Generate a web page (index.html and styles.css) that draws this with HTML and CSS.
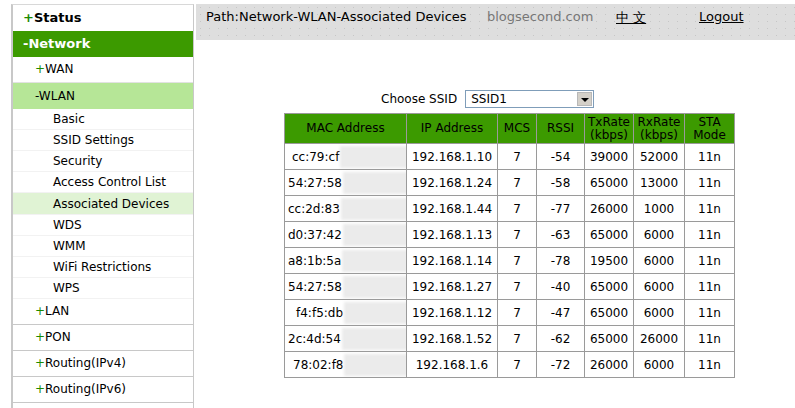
FILE: index.html
```html
<!DOCTYPE html>
<html lang="en">

<head>
  <meta charset="UTF-8">
  <title>Associated Devices</title>
  <link rel="stylesheet" href="styles.css">
</head>

<body>
  <div class="page">
    <!-- Left menu -->
    <div class="menu">
      <div class="top-item"><span class="plus">+</span>Status</div>
      <div class="top-item active">-Network</div>
      <div class="sub-item"><span class="plus">+</span>WAN</div>
      <div class="sub-item open">-WLAN</div>
      <div class="leaf">Basic</div>
      <div class="leaf">SSID Settings</div>
      <div class="leaf">Security</div>
      <div class="leaf">Access Control List</div>
      <div class="leaf current">Associated Devices</div>
      <div class="leaf">WDS</div>
      <div class="leaf">WMM</div>
      <div class="leaf">WiFi Restrictions</div>
      <div class="leaf">WPS</div>
      <div class="sub-item line"><span class="plus">+</span>LAN</div>
      <div class="sub-item line"><span class="plus">+</span>PON</div>
      <div class="sub-item line"><span class="plus">+</span>Routing(IPv4)</div>
      <div class="sub-item line"><span class="plus">+</span>Routing(IPv6)</div>
    </div>

    <!-- Main content -->
    <div class="main">
      <div class="topbar">
        <span class="path">Path:Network-WLAN-Associated Devices</span>
        <span class="site">blogsecond.com</span>
        <a class="lang" href="#">中 文</a>
        <a class="logout" href="#">Logout</a>
      </div>

      <div class="choose">
        <span>Choose SSID</span>
        <div class="select">
          <span>SSID1</span>
          <span class="arrow"></span>
        </div>
      </div>

      <table class="devices">
        <colgroup>
          <col style="width:122px">
          <col style="width:91px">
          <col style="width:39px">
          <col style="width:48px">
          <col style="width:49px">
          <col style="width:51px">
          <col style="width:50px">
        </colgroup>
        <thead>
          <tr>
            <th>MAC Address</th>
            <th>IP Address</th>
            <th>MCS</th>
            <th>RSSI</th>
            <th>TxRate<br>(kbps)</th>
            <th>RxRate<br>(kbps)</th>
            <th>STA<br>Mode</th>
          </tr>
        </thead>
        <tbody id="rows"></tbody>
      </table>
    </div>
  </div>

  <script>
    const devices = [
      ['cc:79:cf', 4, '192.168.1.10', '-54', '39000', '52000'],
      ['54:27:58', 0, '192.168.1.24', '-58', '65000', '13000'],
      ['cc:2d:83', 0, '192.168.1.44', '-77', '26000', '1000'],
      ['d0:37:42', 0, '192.168.1.13', '-63', '65000', '6000'],
      ['a8:1b:5a', 0, '192.168.1.14', '-78', '19500', '6000'],
      ['54:27:58', 0, '192.168.1.27', '-40', '65000', '6000'],
      ['f4:f5:db', 8, '192.168.1.12', '-47', '65000', '6000'],
      ['2c:4d:54', 0, '192.168.1.52', '-62', '65000', '26000'],
      ['78:02:f8', 5, '192.168.1.6', '-72', '26000', '6000']
    ];

    const rows = document.getElementById('rows');
    devices.forEach(d => {
      const tr = document.createElement('tr');
      tr.innerHTML = `
        <td class="mac"><span class="mac-text" style="margin-left:${d[1]}px">${d[0]}</span><span class="blur"></span></td>
        <td>${d[2]}</td>
        <td>7</td>
        <td>${d[3]}</td>
        <td>${d[4]}</td>
        <td>${d[5]}</td>
        <td>11n</td>
      `;
      rows.appendChild(tr);
    });
  </script>
</body>

</html>
```

FILE: styles.css
```css
body {
  margin: 0;
  background: #fff;
  font-family: "DejaVu Sans", Verdana, sans-serif;
  font-size: 12px;
  color: #000;
}

.page {
  display: flex;
  align-items: flex-start;
  padding-top: 4px;
  padding-left: 11px;
  height: 404px;
  overflow: hidden;
}

/* left menu */
.menu {
  width: 180px;
  height: 420px;
  border-left: 2px solid #c8c8c8;
  border-right: 1px solid #c8c8c8;
  border-top: 1px solid #d8d8d8;
  flex-shrink: 0;
}

.top-item {
  height: 26px;
  line-height: 26px;
  padding-left: 10px;
  font-weight: bold;
  font-size: 13px;
}

.top-item.active {
  background-color: #3c9a00;
  color: #fff;
}

.plus {
  color: #1c8a00;
}

.sub-item {
  height: 25px;
  line-height: 25px;
  padding-left: 22px;
  border-bottom: 1px solid #e2e2e2;
}

.sub-item.open {
  background-color: #b6e697;
  border-bottom: none;
  height: 26px;
  line-height: 26px;
}

.sub-item.line {
  border-bottom: 1px solid #c8c8c8;
}

.leaf {
  height: 20px;
  line-height: 20px;
  padding-left: 40px;
  border-bottom: 1px solid #f2f2f2;
}

.leaf.current {
  background-color: #e0f3d4;
  height: 21px;
  line-height: 22px;
}

/* main */
.main {
  flex: 1;
  margin-left: 2px;
}

.topbar {
  height: 36px;
  display: flex;
  align-items: flex-start;
  padding-top: 5px;
  box-sizing: border-box;
  background-color: #dedede;
  background-image: radial-gradient(#c6c6c6 0.7px, transparent 0.9px);
  background-size: 9px 7px;
  font-size: 13px;
}

.path {
  margin-left: 10px;
  width: 281px;
}

.site {
  color: #777;
  width: 129px;
}

.lang {
  color: #000;
  width: 83px;
}

.logout {
  color: #000;
}

.choose {
  display: flex;
  align-items: center;
  gap: 8px;
  margin-top: 50px;
  margin-left: 185px;
  height: 18px;
}

.select {
  height: 16px;
  border: 1px solid #7f9db9;
  display: flex;
  align-items: center;
  justify-content: space-between;
  padding-left: 5px;
  width: 122px;
}

.arrow {
  width: 15px;
  height: 14px;
  margin-right: 1px;
  background: #d4d0c8;
  border: 1px solid #b8b8b8;
  box-sizing: border-box;
  position: relative;
}

.arrow::after {
  content: "";
  position: absolute;
  left: 3px;
  top: 5px;
  border-left: 4px solid transparent;
  border-right: 4px solid transparent;
  border-top: 4px solid #000;
}

/* table */
.devices {
  margin-top: 5px;
  margin-left: 88px;
  border-collapse: collapse;
  table-layout: fixed;
  width: 451px;
}

.devices th,
.devices td {
  border: 1px solid #9a9a9a;
  text-align: center;
  padding: 0;
  white-space: nowrap;
  overflow: hidden;
}

.devices th {
  background-color: #3c9a00;
  font-weight: normal;
  height: 29px;
  line-height: 13px;
}

.devices td {
  height: 25px;
}

.devices td.mac {
  text-align: left;
  padding-left: 3px;
}

.mac-text {
  vertical-align: middle;
}

.blur {
  display: inline-block;
  width: 68px;
  height: 22px;
  margin-left: 1px;
  background: #ebebeb;
  filter: blur(1.5px);
  vertical-align: middle;
}
```
